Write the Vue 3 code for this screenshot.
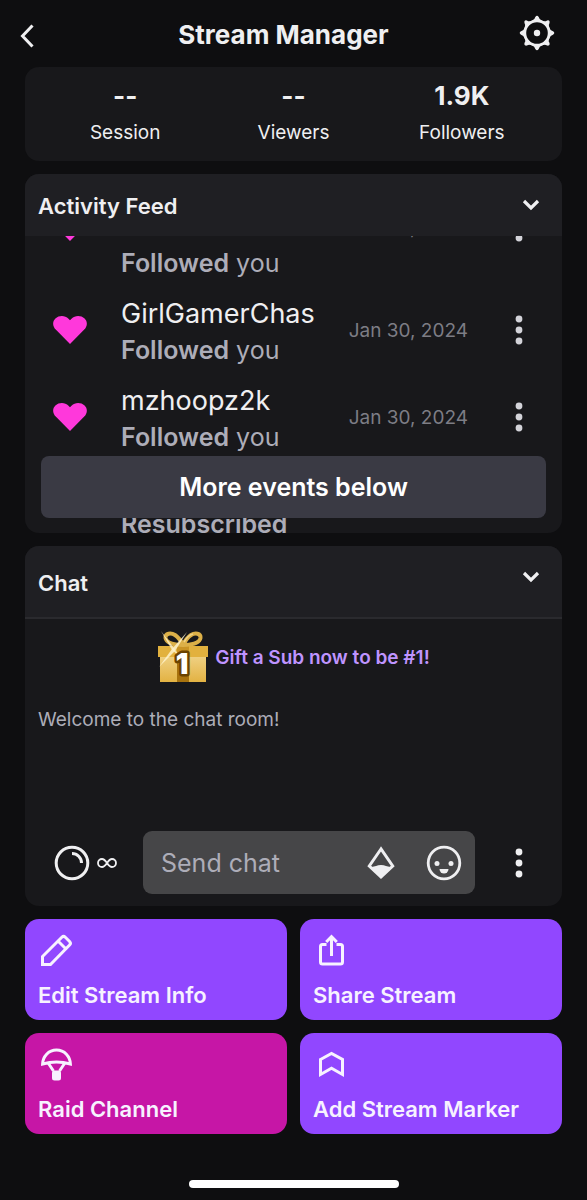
<script setup>
import { ref } from 'vue'

const stats = [
  { value: '--', label: 'Session' },
  { value: '--', label: 'Viewers' },
  { value: '1.9K', label: 'Followers' },
]

const events = [
  { name: '', action: 'Followed', rest: 'you', date: 'Jan 30, 2024', tall: true },
  { name: 'GirlGamerChas', action: 'Followed', rest: 'you', date: 'Jan 30, 2024' },
  { name: 'mzhoopz2k', action: 'Followed', rest: 'you', date: 'Jan 30, 2024' },
  { name: '', action: 'Resubscribed', rest: '', date: '' },
]

const teeth = [0, 45, 90, 135, 180, 225, 270, 315]
const message = ref('')
</script>

<template>
  <div class="page">
    <header class="topbar">
      <button class="icon-btn back" type="button" aria-label="Back">
        <svg width="16" height="24" viewBox="0 0 16 24"><path d="M13.500 1.500 3.500 12l10 10.500" fill="none" stroke="currentColor" stroke-width="3" /></svg>
      </button>
      <h1>Stream Manager</h1>
      <button class="icon-btn settings" type="button" aria-label="Settings">
        <svg width="36" height="36" viewBox="-18 -18 36 36">
          <circle r="12.200" fill="none" stroke="currentColor" stroke-width="2.800" />
          <path v-for="a in teeth" :key="a" :transform="`rotate(${a})`" d="M-5.200-12.300Q-2.200-13.200-1.700-16Q0-18.600 1.700-16Q2.200-13.200 5.200-12.300Q0-10-5.200-12.300Z" fill="currentColor" />
          <circle r="3.200" fill="currentColor" />
        </svg>
      </button>
    </header>

    <main>
      <section class="card stats" aria-label="Stream stats">
        <div v-for="s in stats" :key="s.label" class="stat">
          <strong>{{ s.value }}</strong>
          <span>{{ s.label }}</span>
        </div>
      </section>

      <section class="card">
        <div class="card-head">
          <h2>Activity Feed</h2>
          <button class="icon-btn" type="button" aria-label="Collapse activity feed">
            <svg width="18" height="12" viewBox="0 0 18 12"><path d="m2 2 7 7 7-7" fill="none" stroke="currentColor" stroke-width="3.200" /></svg>
          </button>
        </div>
        <div class="feed">
          <ul>
            <li v-for="(e, i) in events" :key="i" :class="{ tall: e.tall }">
              <svg class="heart" width="34" height="28" viewBox="0 0 34 28"><path d="M17 28 3 13.800C-.8 10-.6 5.400 2.400 2.500 6-.8 12-.8 15.500 2.700L17 4.200l1.500-1.500C22-.8 28-.8 31.600 2.500c3 2.900 3.200 7.500-.6 11.300Z" fill="#ff38db" /></svg>
              <div class="event">
                <p class="name">{{ e.name }}</p>
                <p class="action"><b>{{ e.action }}</b> {{ e.rest }}</p>
              </div>
              <time v-if="e.date">{{ e.date }}</time>
              <button v-if="e.date" class="icon-btn more" type="button" aria-label="Event options">
                <svg width="8" height="30" viewBox="0 0 8 30" fill="currentColor"><circle cx="4" cy="4" r="3.400" /><circle cx="4" cy="15" r="3.400" /><circle cx="4" cy="26" r="3.400" /></svg>
              </button>
            </li>
          </ul>
          <button class="below" type="button">More events below</button>
        </div>
      </section>

      <section class="card">
        <div class="card-head chat-head">
          <h2>Chat</h2>
          <button class="icon-btn" type="button" aria-label="Collapse chat">
            <svg width="18" height="12" viewBox="0 0 18 12"><path d="m2 2 7 7 7-7" fill="none" stroke="currentColor" stroke-width="3.200" /></svg>
          </button>
        </div>
        <a class="gift" href="#gift">
          <svg width="52" height="54" viewBox="0 0 52 54">
            <defs>
              <linearGradient id="box" x1="0" y1="0" x2="0" y2="1"><stop offset="0" stop-color="#efd184" /><stop offset="1" stop-color="#e3b243" /></linearGradient>
            </defs>
            <rect x="3" y="26" width="46" height="26" fill="url(#box)" />
            <rect x="1" y="16" width="50" height="11" fill="#e2b13e" />
            <rect x="20" y="16" width="12" height="11" fill="#c99425" />
            <rect x="20" y="27" width="12" height="25" fill="#a8730f" />
            <path d="M26 15C19 15 9.500 13.500 8.500 8 8 3 14 2.500 18 5 21 7 24 11 26 15 28 11 31 7 34 5 38 2.500 44 3 43.500 8 42.500 13.500 33 15 26 15Z" fill="none" stroke="#dcb048" stroke-width="4" stroke-linejoin="round" />
            <path d="M27 12C30 7 33 4.500 36 4" fill="none" stroke="#efd184" stroke-width="1.500" />
            <path d="m2 37 13-18L30 2 18 21Z" fill="#fff3cc" opacity=".85" />
            <path d="m4 1 13 17 6 9-8-7Z" fill="#fff3cc" opacity=".8" />
            <text x="25" y="44" text-anchor="middle">1</text>
          </svg>
          <span>Gift a Sub now to be #1!</span>
        </a>
        <p class="welcome">Welcome to the chat room!</p>
        <form class="composer" @submit.prevent>
          <button class="icon-btn points" type="button" aria-label="Channel points">
            <svg width="36" height="36" viewBox="0 0 36 36" fill="none" stroke="currentColor" stroke-width="3"><circle cx="18" cy="18" r="15.800" /><path d="M18 8.500a9.500 9.500 0 0 1 9.500 9.500" /></svg>
            <svg width="20" height="12" viewBox="0 0 20 12" fill="none" stroke="currentColor" stroke-width="1.800"><path d="M10 6C8 3 7 2 5 2a4 4 0 0 0 0 8c2 0 3-1 5-4s3-4 5-4a4 4 0 0 1 0 8c-2 0-3-1-5-4Z" /></svg>
          </button>
          <div class="field">
            <input v-model="message" type="text" placeholder="Send chat" aria-label="Send chat">
            <button class="icon-btn" type="button" aria-label="Cheer with Bits">
              <svg width="30" height="34" viewBox="0 0 30 34"><path d="M15 3 3.300 20 15 31 26.700 20Z" fill="none" stroke="currentColor" stroke-width="3" /><path d="M3 20.500c5 1.500 7-1.500 12-1.500s7 3 12 1.500L15 32Z" fill="currentColor" /></svg>
            </button>
            <button class="icon-btn" type="button" aria-label="Emotes">
              <svg width="36" height="36" viewBox="0 0 36 36"><circle cx="18" cy="18" r="15.800" fill="none" stroke="currentColor" stroke-width="2.800" /><circle cx="11" cy="18.500" r="2.500" fill="currentColor" /><circle cx="25" cy="18.500" r="2.500" fill="currentColor" /><path d="M13.500 24h9a4.500 4.500 0 0 1-9 0Z" fill="currentColor" /></svg>
            </button>
          </div>
          <button class="icon-btn more bright" type="button" aria-label="Chat options">
            <svg width="8" height="30" viewBox="0 0 8 30" fill="currentColor"><circle cx="4" cy="4" r="3.400" /><circle cx="4" cy="15" r="3.400" /><circle cx="4" cy="26" r="3.400" /></svg>
          </button>
        </form>
      </section>

      <nav class="actions" aria-label="Quick actions">
        <button class="tile" type="button">
          <svg width="36" height="36" viewBox="0 0 36 36" fill="none" stroke="currentColor" stroke-width="3"><path d="M4.500 32.500v-8L23.800 5.200a2.500 2.500 0 0 1 3.500 0l4.300 4.300a2.500 2.500 0 0 1 0 3.500L12.500 32.500ZM20 9l8 8" /></svg>
          <span>Edit Stream Info</span>
        </button>
        <button class="tile" type="button">
          <svg width="36" height="36" viewBox="0 0 36 36" fill="none" stroke="currentColor" stroke-width="3"><path d="M13.500 12.500H9.500a2 2 0 0 0-2 2V30a2 2 0 0 0 2 2h18a2 2 0 0 0 2-2V14.500a2 2 0 0 0-2-2h-4M18.500 24V5M13.200 10l5.300-5.300 5.300 5.300" /></svg>
          <span>Share Stream</span>
        </button>
        <button class="tile raid" type="button">
          <svg width="36" height="36" viewBox="0 0 36 36" fill="none" stroke="currentColor" stroke-width="3"><path d="M4.600 18C4.800 10.500 10.500 4 18.500 4S32.200 10.500 32.400 18C23 15.200 14 15.200 4.600 18ZM10.500 17.500l5 7.500M26.500 17.500l-5 7.500" /><rect x="15.500" y="26" width="6" height="7" rx="1" fill="currentColor" /></svg>
          <span>Raid Channel</span>
        </button>
        <button class="tile" type="button">
          <svg width="36" height="36" viewBox="0 0 36 36" fill="none" stroke="currentColor" stroke-width="3"><path d="M7.500 13.500 18.500 7.500l11 6V28.500l-11-6.200L7.500 28.500Z" /></svg>
          <span>Add Stream Marker</span>
        </button>
      </nav>
    </main>
    <div class="home-bar"></div>
  </div>
</template>

<style>
body {
  background: #0e0e10;
}
</style>

<style scoped>
.page {
  min-height: 100vh;
  box-sizing: border-box;
  display: flex;
  flex-direction: column;
  padding-bottom: 12px;
  background: #0e0e10;
  color: #efeff1;
  font-family: Inter, "Liberation Sans", sans-serif;
}
h1, h2, p, ul {
  margin: 0;
  padding: 0;
}
svg {
  display: block;
  flex: none;
}
button, input {
  font: inherit;
  color: inherit;
  border: 0;
  margin: 0;
  padding: 0;
  background: none;
}
.icon-btn {
  display: flex;
  align-items: center;
  justify-content: center;
  flex: none;
}
.topbar {
  display: grid;
  grid-template-columns: 60px 1fr 60px;
  align-items: center;
  height: 67px;
  padding: 0 10px;
}
.topbar h1 {
  padding: 3px 20px 0 0;
  text-align: center;
  font-size: 26px;
  line-height: 32px;
  font-weight: 700;
}
.back {
  justify-content: flex-start;
  padding: 4px 0 0 9px;
}
.settings {
  justify-content: flex-end;
  padding: 0 22px 2px 0;
}
main {
  display: flex;
  flex-direction: column;
  gap: 13px;
  padding: 0 25px;
}
.card {
  border-radius: 14px;
  background: #18181b;
  overflow: hidden;
}
.stats {
  display: grid;
  grid-template-columns: repeat(3, 1fr);
  padding: 13px 16px 16px;
}
.stat {
  display: flex;
  flex-direction: column;
  align-items: center;
  gap: 8px;
}
.stat strong {
  font-size: 26px;
  line-height: 32px;
  font-weight: 700;
}
.stat span {
  font-size: 19px;
  line-height: 25px;
}
.card-head {
  display: flex;
  align-items: center;
  justify-content: space-between;
  height: 62px;
  padding: 0 22px 0 13px;
  background: #1f1f23;
}
.card-head h2 {
  padding-top: 2px;
  font-size: 22px;
  line-height: 28px;
  font-weight: 600;
}
.chat-head {
  height: 71px;
  border-bottom: 2px solid #2a2a2e;
}
.chat-head .icon-btn {
  padding-bottom: 10px;
}
.feed {
  position: relative;
  height: 297px;
  overflow: hidden;
}
.feed ul {
  display: flex;
  flex-direction: column;
  gap: 15px;
  margin-top: -59px;
  list-style: none;
}
.feed li {
  display: flex;
  align-items: center;
  height: 72px;
  padding: 0 21px 0 28px;
}
.feed .tall {
  height: 104px;
}
.tall .event {
  align-self: flex-end;
}
.heart {
  margin: 0 34px 4px 0;
}
.event {
  flex: 1;
  min-width: 0;
  white-space: nowrap;
}
.name {
  height: 36px;
  font-size: 27px;
  line-height: 36px;
}
.action {
  font-size: 25px;
  line-height: 36px;
  color: #adadb8;
}
.action b {
  font-weight: 600;
}
time {
  padding-bottom: 2px;
  font-size: 19px;
  line-height: 24px;
  color: #7d7d85;
}
.more {
  width: 44px;
  margin-left: 29px;
  padding-bottom: 4px;
  color: #d3d3d9;
}
.below {
  position: absolute;
  left: 16px;
  right: 16px;
  bottom: 15px;
  height: 62px;
  border-radius: 8px;
  background: #3a3a44;
  color: #fff;
  font-size: 25px;
  line-height: 32px;
  font-weight: 600;
}
.gift {
  display: flex;
  align-items: center;
  justify-content: center;
  gap: 6px;
  height: 76px;
  color: #bf94ff;
  font-size: 19px;
  line-height: 24px;
  font-weight: 600;
  text-decoration: none;
}
.gift span {
  padding-top: 2px;
}
.gift text {
  font-size: 28px;
  font-weight: 900;
  fill: #fff;
  stroke: #6b4300;
  stroke-width: 5px;
  stroke-linejoin: round;
  paint-order: stroke;
}
.welcome {
  height: 124px;
  padding: 13px 13px 0;
  box-sizing: border-box;
  color: #adadb8;
  font-size: 19px;
  line-height: 24px;
}
.composer {
  display: flex;
  align-items: center;
  padding: 12px 21px 12px 29px;
}
.points {
  gap: 7px;
  margin-right: 26px;
}
.field {
  display: flex;
  align-items: center;
  flex: 1;
  min-width: 0;
  height: 63px;
  box-sizing: border-box;
  gap: 30px;
  padding: 0 13px 0 18px;
  border-radius: 9px;
  background: #464648;
}
.field input {
  flex: 1;
  min-width: 0;
  font-size: 25px;
  line-height: 32px;
}
.field input::placeholder {
  color: #adadb8;
  opacity: 1;
}
.bright {
  margin-left: 22px;
  padding: 0;
  color: #efeff1;
}
.actions {
  display: grid;
  grid-template-columns: 1fr 1fr;
  gap: 13px;
}
.tile {
  display: flex;
  flex-direction: column;
  align-items: flex-start;
  gap: 13px;
  padding: 13px 13px 11px;
  border-radius: 14px;
  background: #9147ff;
  color: #f7f2ff;
  font-size: 22px;
  line-height: 28px;
  font-weight: 600;
}
.raid {
  background: #c616a6;
}
.home-bar {
  width: 210px;
  height: 8px;
  margin: auto auto 0;
  border-radius: 4px;
  background: #fff;
}
</style>
